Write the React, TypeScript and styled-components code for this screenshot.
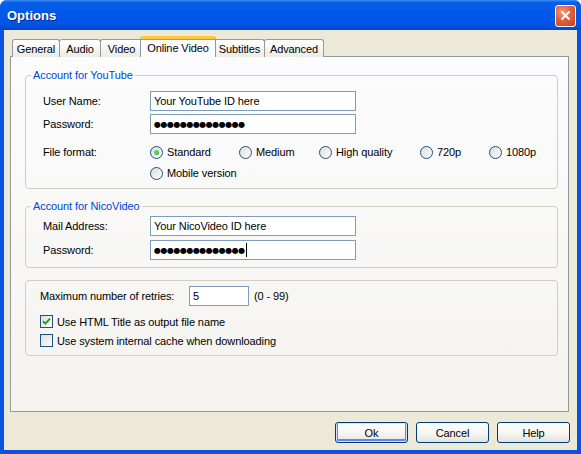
import styled, { createGlobalStyle, css } from "styled-components";

const Global = createGlobalStyle`
  html, body { margin: 0; padding: 0; background: #fff; }
  body { font-family: "Liberation Sans", Arial, sans-serif; font-size: 11px; color: #000; letter-spacing: -0.1px; }
  * { box-sizing: border-box; }
`;

const Window = styled.div`
  width: 581px;
  height: 454px;
  display: flex;
  flex-direction: column;
  background: #0853e0;
  border-radius: 7px 7px 0 0;
  overflow: hidden;
`;

const TitleBar = styled.div`
  height: 30px;
  flex: none;
  display: flex;
  align-items: center;
  justify-content: space-between;
  padding: 0 5px 0 7px;
  background: linear-gradient(#3d8ef7 0, #0a5fe6 8%, #0058e8 40%, #0055e5 80%, #0047cc 100%);
`;

const Title = styled.span`
  color: #fff;
  font-family: "Liberation Sans", Arial, sans-serif;
  font-weight: bold;
  font-size: 13px;
  letter-spacing: 0;
  text-shadow: 1px 1px 0 #0a2a8a;
  padding-top: 1px;
`;

const CloseButton = styled.div`
  width: 21px;
  height: 22px;
  border: 1px solid #fff;
  border-radius: 3px;
  background: radial-gradient(circle at 35% 30%, #f29a80 0, #e2603c 45%, #c3401c 100%);
  display: flex;
  align-items: center;
  justify-content: center;
  margin-top: 1px;
`;

const Body = styled.div`
  flex: 1;
  margin: 0 4px 4px 4px;
  background: #ece9d8;
  padding: 6px 8px 0 6px;
  display: flex;
  flex-direction: column;
`;

const TabStrip = styled.div`
  display: flex;
  align-items: flex-end;
  height: 21px;
  padding-left: 2px;
  margin-bottom: -1px;
  position: relative;
  z-index: 1;
`;

const Tab = styled.div<{ $active?: boolean; $width: number }>`
  width: ${(p) => p.$width}px;
  height: 18px;
  display: flex;
  align-items: center;
  justify-content: center;
  border: 1px solid #919b9c;
  border-bottom: none;
  border-radius: 3px 3px 0 0;
  background: linear-gradient(#fff, #ecebe6);
  margin-right: -1px;
  white-space: nowrap;
  ${(p) =>
    p.$active &&
    css`
      height: 21px;
      padding-bottom: 1px;
      margin: 0 -2px 0 -2px;
      background: #fcfcfe;
      border-top: 3px solid #ffc83c;
      position: relative;
      z-index: 2;
      box-shadow: inset 0 1px 0 #e68b2c;
    `}
`;

const Panel = styled.div`
  height: 356px;
  border: 1px solid #919b9c;
  background: linear-gradient(#fcfcfe, #f4f3ee);
  padding: 12px 10px 0 14px;
  display: flex;
  flex-direction: column;
`;

const Group = styled.fieldset<{ $gap?: number }>`
  margin: 0 0 ${(p) => p.$gap ?? 0}px 0;
  padding: 9px 10px 5px 17px;
  border: 1px solid #d0d0bf;
  border-radius: 4px;
  min-width: 0;
`;

const Legend = styled.legend`
  color: #0046d5;
  padding: 0 2px;
  margin-left: -12px;
  line-height: 13px;
`;

const Row = styled.div<{ $height?: number; $mt?: number }>`
  display: flex;
  align-items: center;
  height: ${(p) => p.$height ?? 20}px;
  margin-top: ${(p) => p.$mt ?? 0}px;
`;

const Label = styled.span<{ $width: number }>`
  width: ${(p) => p.$width}px;
  flex: none;
`;

const TextBox = styled.div<{ $width: number }>`
  width: ${(p) => p.$width}px;
  height: 20px;
  border: 1px solid #7f9db9;
  background: #fff;
  padding: 0 3px;
  display: flex;
  align-items: center;
  white-space: nowrap;
`;

const Dots = styled.span`
  font-family: "DejaVu Sans", sans-serif;
  font-size: 8px;
  letter-spacing: -0.5px;
`;

const Caret = styled.span`
  width: 1px;
  height: 14px;
  background: #000;
  margin-left: 1px;
`;

const RadioGrid = styled.div`
  display: grid;
  grid-template-columns: 89px 80px 101px 69px auto;
  grid-auto-rows: 20px;
  row-gap: 1px;
  align-items: center;
`;

const Choice = styled.label`
  display: flex;
  align-items: center;
  gap: 4px;
  white-space: nowrap;
`;

const RadioCircle = styled.span<{ $on?: boolean }>`
  width: 13px;
  height: 13px;
  border-radius: 50%;
  border: 1px solid #1c5180;
  background: linear-gradient(135deg, #dcdcd7, #fff);
  display: flex;
  align-items: center;
  justify-content: center;
  flex: none;
  &::after {
    content: "";
    width: 5px;
    height: 5px;
    border-radius: 50%;
    background: ${(p) => (p.$on ? "radial-gradient(circle at 40% 40%, #7be07b, #21a121)" : "transparent")};
  }
`;

const CheckBox = styled.span`
  width: 13px;
  height: 13px;
  border: 1px solid #1c5180;
  background: linear-gradient(135deg, #dcdcd7, #fff);
  display: flex;
  align-items: center;
  justify-content: center;
  flex: none;
`;

const Hint = styled.span`
  margin-left: 5px;
`;

const ButtonRow = styled.div`
  display: flex;
  justify-content: flex-end;
  gap: 8px;
  margin: 10px -1px 0 0;
`;

const Button = styled.div<{ $default?: boolean }>`
  width: 73px;
  height: 21px;
  border: 1px solid #003c74;
  border-radius: 3px;
  background: linear-gradient(#fff 0, #f4f4f0 60%, #e3e2da 100%);
  display: flex;
  align-items: center;
  justify-content: center;
  ${(p) =>
    p.$default &&
    css`
      box-shadow: inset 0 0 0 1px #cee7ff, inset 0 -1px 0 2px #6982ee;
    `}
`;

const radios = [
  { label: "Standard", on: true },
  { label: "Medium" },
  { label: "High quality" },
  { label: "720p" },
  { label: "1080p" },
  { label: "Mobile version" },
];

const tabs = [
  { label: "General", width: 48 },
  { label: "Audio", width: 42 },
  { label: "Video", width: 43 },
  { label: "Online Video", width: 76, active: true },
  { label: "Subtitles", width: 51 },
  { label: "Advanced", width: 60 },
];

function Radio({ label, on }: { label: string; on?: boolean }) {
  return (
    <Choice>
      <RadioCircle $on={on} />
      {label}
    </Choice>
  );
}

function Check({ label, on }: { label: string; on?: boolean }) {
  return (
    <Choice>
      <CheckBox>
        {on && (
          <svg width="9" height="9" viewBox="0 0 9 9">
            <path d="M1 4.2 L3.4 6.6 L8 1.6" stroke="#21a121" strokeWidth="2" fill="none" />
          </svg>
        )}
      </CheckBox>
      {label}
    </Choice>
  );
}

export default function App() {
  return (
    <>
      <Global />
      <Window>
        <TitleBar>
          <Title>Options</Title>
          <CloseButton>
            <svg width="11" height="11" viewBox="0 0 11 11">
              <path d="M1.5 1.5 L9.5 9.5 M9.5 1.5 L1.5 9.5" stroke="#fff" strokeWidth="2" />
            </svg>
          </CloseButton>
        </TitleBar>
        <Body>
          <TabStrip>
            {tabs.map((t) => (
              <Tab key={t.label} $width={t.width} $active={t.active}>
                {t.label}
              </Tab>
            ))}
          </TabStrip>
          <Panel>
            <Group $gap={11}>
              <Legend>Account for YouTube</Legend>
              <Row>
                <Label $width={107}>User Name:</Label>
                <TextBox $width={206}>Your YouTube ID here</TextBox>
              </Row>
              <Row $mt={3}>
                <Label $width={107}>Password:</Label>
                <TextBox $width={206}>
                  <Dots>●●●●●●●●●●●●●●</Dots>
                </TextBox>
              </Row>
              <Row $height={41} $mt={8}>
                <Label $width={107} style={{ alignSelf: "flex-start", lineHeight: "20px" }}>
                  File format:
                </Label>
                <RadioGrid>
                  {radios.map((r) => (
                    <Radio key={r.label} label={r.label} on={r.on} />
                  ))}
                </RadioGrid>
              </Row>
            </Group>
            <Group $gap={12} style={{ padding: "3px 10px 7px 17px" }}>
              <Legend>Account for NicoVideo</Legend>
              <Row>
                <Label $width={107}>Mail Address:</Label>
                <TextBox $width={206}>Your NicoVideo ID here</TextBox>
              </Row>
              <Row $mt={4}>
                <Label $width={107}>Password:</Label>
                <TextBox $width={206}>
                  <Dots>●●●●●●●●●●●●●●</Dots>
                  <Caret />
                </TextBox>
              </Row>
            </Group>
            <Group style={{ padding: "5px 10px 5px 14px" }}>
              <Row>
                <Label $width={149}>Maximum number of retries:</Label>
                <TextBox $width={60}>5</TextBox>
                <Hint>(0 - 99)</Hint>
              </Row>
              <Row $height={19} $mt={6}>
                <Check label="Use HTML Title as output file name" on />
              </Row>
              <Row $height={19}>
                <Check label="Use system internal cache when downloading" />
              </Row>
            </Group>
          </Panel>
          <ButtonRow>
            <Button $default>Ok</Button>
            <Button>Cancel</Button>
            <Button>Help</Button>
          </ButtonRow>
        </Body>
      </Window>
    </>
  );
}
